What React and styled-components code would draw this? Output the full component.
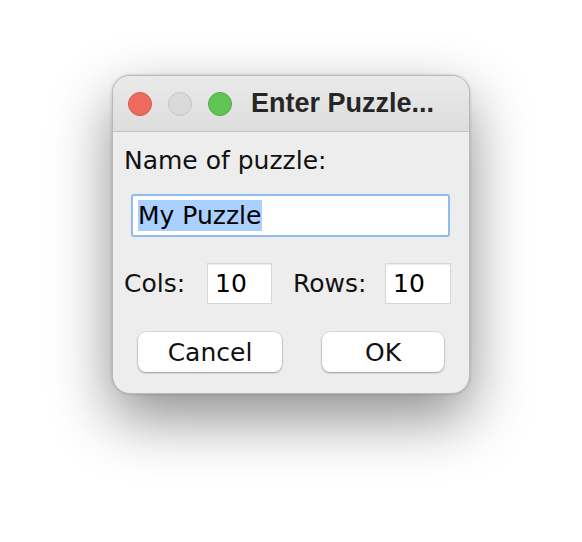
import styled, { createGlobalStyle } from 'styled-components'

const GlobalStyle = createGlobalStyle`
    body {
        margin: 0;
        background: #ffffff;
        font-family: "DejaVu Sans", sans-serif;
    }
`

const Page = styled.div`
    width: 582px;
    height: 542px;
    display: flex;
    justify-content: center;
    padding-top: 75px;
    box-sizing: border-box;
`

const Window = styled.div`
    width: 358px;
    height: 319px;
    box-sizing: border-box;
    background: #ededed;
    border: 1px solid #b9b9b9;
    border-radius: 18px;
    box-shadow: 0 24px 60px rgba(0, 0, 0, 0.45), 0 0 3px rgba(0, 0, 0, 0.2);
    display: flex;
    flex-direction: column;
    overflow: hidden;
`

const TitleBar = styled.div`
    height: 55px;
    flex-shrink: 0;
    display: flex;
    align-items: center;
    padding-left: 15px;
    background: linear-gradient(#eaeaea, #dddddd);
    border-bottom: 1px solid #c3c3c3;
`

const Light = styled.span`
    width: 24px;
    height: 24px;
    border-radius: 50%;
    box-sizing: border-box;
    margin-right: 16px;
    background: ${p => p.color};
    border: 1px solid ${p => p.edge};
`

const Title = styled.div`
    margin-left: 3px;
    font-family: "Liberation Sans", sans-serif;
    font-weight: bold;
    font-size: 27px;
    color: #262626;
`

const Body = styled.div`
    display: flex;
    flex-direction: column;
    padding: 14px 0 0 0;
`

const Label = styled.div`
    font-size: 25px;
    line-height: 30px;
    color: #111;
    padding-left: 11px;
`

const NameField = styled.div`
    margin: 18px 19px 0 18px;
    height: 43px;
    box-sizing: border-box;
    background: #fff;
    border: 2px solid #8fbcef;
    border-radius: 3px;
    display: flex;
    align-items: center;
    padding-left: 5px;
`

const Selected = styled.span`
    background: #a9d0ff;
    font-size: 25px;
    line-height: 31px;
    color: #000;
    padding: 0 1px 0 0;
`

const SizeRow = styled.div`
    margin-top: 26px;
    height: 41px;
    display: flex;
    align-items: center;
    padding-left: 11px;
`

const SizeLabel = styled.span`
    font-size: 25px;
    color: #111;
    width: ${p => p.w}px;
`

const NumField = styled.div`
    width: ${p => p.w}px;
    height: 41px;
    box-sizing: border-box;
    background: #fff;
    border: 1px solid #d6d6d6;
    box-shadow: inset 0 1px 1px rgba(0, 0, 0, 0.08);
    display: flex;
    align-items: center;
    padding-left: 7px;
    font-size: 25px;
    color: #000;
    margin-right: ${p => p.mr || 0}px;
`

const ButtonRow = styled.div`
    margin-top: 28px;
    display: flex;
    gap: 40px;
    padding-left: 25px;
`

const Button = styled.button`
    width: ${p => p.w}px;
    height: 40px;
    background: #fff;
    border: none;
    border-radius: 8px;
    box-shadow: 0 0 0 0.5px rgba(0, 0, 0, 0.15), 0 1px 2px rgba(0, 0, 0, 0.3);
    font-family: "DejaVu Sans", sans-serif;
    font-size: 25px;
    color: #111;
    padding: 0;
`

const App = () => {
    return (
        <Page>
            <GlobalStyle />
            <Window>
                <TitleBar>
                    <Light color="#ee6a5e" edge="#d5564b" />
                    <Light color="#dadada" edge="#c4c4c4" />
                    <Light color="#60c454" edge="#4fa944" />
                    <Title>Enter Puzzle...</Title>
                </TitleBar>
                <Body>
                    <Label>Name of puzzle:</Label>
                    <NameField>
                        <Selected>My Puzzle</Selected>
                    </NameField>
                    <SizeRow>
                        <SizeLabel w={83}>Cols:</SizeLabel>
                        <NumField w={65} mr={21}>10</NumField>
                        <SizeLabel w={92}>Rows:</SizeLabel>
                        <NumField w={66}>10</NumField>
                    </SizeRow>
                    <ButtonRow>
                        <Button w={144}>Cancel</Button>
                        <Button w={122}>OK</Button>
                    </ButtonRow>
                </Body>
            </Window>
        </Page>
    )
}

export default App
